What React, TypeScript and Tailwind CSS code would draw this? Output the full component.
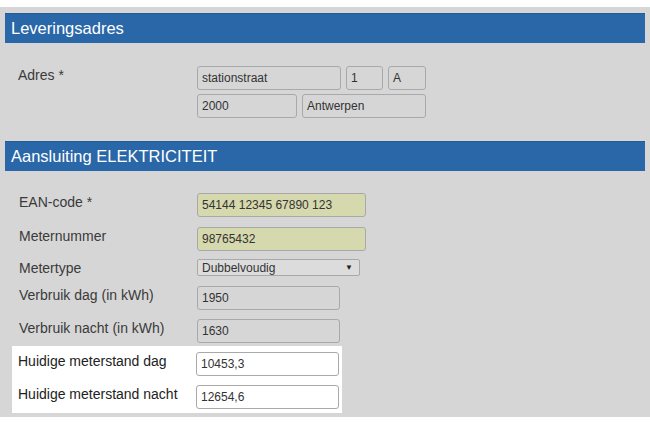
import React from 'react';

function Header({ title }: { title: string }) {
  return (
    <div className="h-[30px] bg-[#2a67a8] border-t border-[#245c97] flex items-center pl-[6px] pb-[1px] text-white text-[16.5px] leading-none">
      {title}
    </div>
  );
}

function Field({ value, w, yellow, white }: { value: string; w: string; yellow?: boolean; white?: boolean }) {
  const bg = yellow ? 'bg-[#d6d9ad]' : white ? 'bg-white' : 'bg-[#d6d6d6]';
  return (
    <div className={`${w} h-[24px] ${bg} border border-[#a9a9a9] rounded-[3px] flex items-center pl-[4px] text-[12px] text-[#333] shrink-0`}>
      {value}
    </div>
  );
}

function Row({ label, children, className = '', dark }: { label: string; children: React.ReactNode; className?: string; dark?: boolean }) {
  return (
    <div className={`flex items-start ${className}`}>
      <div className={`w-[178px] shrink-0 text-[14px] leading-[18px] ${dark ? 'text-[#222]' : 'text-[#3a3a3a]'}`}>{label}</div>
      {children}
    </div>
  );
}

export default function App() {
  return (
    <div className="w-[650px] h-[425px] bg-white pt-[7px]" style={{ fontFamily: '"Liberation Sans", Arial, sans-serif' }}>
      <div className="bg-[#d6d6d6] h-[410px] px-[5px] pt-[6px]">
        <Header title="Leveringsadres" />
        <div className="flex items-start pl-[13px] mt-[23px]">
          <div className="w-[179px] shrink-0 text-[14px] leading-[18px] text-[#3a3a3a]">Adres *</div>
          <div className="flex flex-col gap-[4px]">
            <div className="flex gap-[5px]">
              <Field value="stationstraat" w="w-[144px]" />
              <Field value="1" w="w-[37px]" />
              <Field value="A" w="w-[38px]" />
            </div>
            <div className="flex gap-[5px]">
              <Field value="2000" w="w-[100px]" />
              <Field value="Antwerpen" w="w-[124px]" />
            </div>
          </div>
        </div>

        <div className="mt-[23px]">
          <Header title="Aansluiting ELEKTRICITEIT" />
        </div>
        <div className="pl-[13px]">
          <Row label="EAN-code *" className="mt-[22px] pl-px">
            <Field value="54144 12345 67890 123" w="w-[169px]" yellow />
          </Row>
          <Row label="Meternummer" className="mt-[10px] pl-px">
            <Field value="98765432" w="w-[169px]" yellow />
          </Row>
          <Row label="Metertype" className="mt-[8px] pl-px">
            <div className="w-[163px] h-[17px] bg-[#dcdcdc] border border-[#a9a9a9] rounded-[2px] flex items-center justify-between pl-[4px] pr-[6px] text-[12px] text-[#333]">
              <span>Dubbelvoudig</span>
              <span className="text-[8px] text-[#222]">▼</span>
            </div>
          </Row>
          <Row label="Verbruik dag (in kWh)" className="mt-[9px] pl-px">
            <Field value="1950" w="w-[143px]" />
          </Row>
          <Row label="Verbruik nacht (in kWh)" className="mt-[9px] pl-px">
            <Field value="1630" w="w-[143px]" />
          </Row>
        </div>
        <div className="ml-[7px] mt-[3px] w-[330px] bg-white pt-[6px] pb-[4px] pl-[6px]">
          <Row label="Huidige meterstand dag" dark>
            <Field value="10453,3" w="w-[143px]" white />
          </Row>
          <Row label="Huidige meterstand nacht" className="mt-[9px]" dark>
            <Field value="12654,6" w="w-[143px]" white />
          </Row>
        </div>
      </div>
    </div>
  );
}
